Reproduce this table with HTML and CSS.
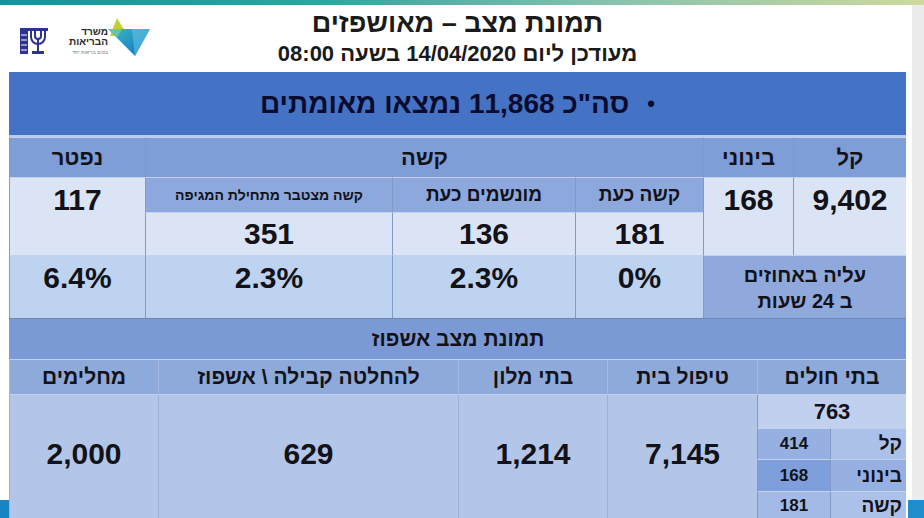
FILE: index.html
```html
<!DOCTYPE html>
<html lang="he">
<head>
<meta charset="utf-8">
<title>תמונת מצב – מאושפזים</title>
<link rel="stylesheet" href="styles.css">
</head>
<body>
<div class="stripe"></div>
<div class="page">
  <div class="gutter-left"><div class="corner"></div></div>
  <main class="sheet">
    <header class="top">
      <div class="logos">
        <svg class="emblem" width="28" height="26" viewBox="0 0 28 26">
          <g fill="#2d3192">
            <rect x="0" y="0" width="28" height="3"/>
            <rect x="0" y="0" width="8" height="26"/>
            <path d="M10 3 v6 a8 8 0 0 0 16 0 v-6 h-2 v6 a6 6 0 0 1 -12 0 v-6z"/>
            <path d="M14 3 v5 a4 4 0 0 0 8 0 v-5 h-2 v5 a2 2 0 0 1 -4 0 v-5z"/>
            <rect x="17" y="10" width="2" height="16"/>
            <rect x="12" y="23" width="12" height="3"/>
          </g>
          <g stroke="#ffffff" stroke-width="1">
            <line x1="1" y1="7" x2="7" y2="7"/>
            <line x1="1" y1="12" x2="7" y2="12"/>
            <line x1="1" y1="17" x2="7" y2="17"/>
            <line x1="1" y1="22" x2="7" y2="22"/>
          </g>
        </svg>
        <div class="moh" dir="rtl">
          <div class="moh-name">משרד</div>
          <div class="moh-name">הבריאות</div>
          <div class="moh-tag">בונים בריאות יחד</div>
        </div>
        <svg class="star" width="42" height="40" viewBox="0 0 42 40">
          <defs>
            <linearGradient id="tri" x1="0" y1="0" x2="1" y2="1">
              <stop offset="0" stop-color="#3bb7b9"/>
              <stop offset="0.6" stop-color="#1f8fca"/>
              <stop offset="1" stop-color="#1b6fb5"/>
            </linearGradient>
          </defs>
          <polygon points="9,0 20,18 2,18" fill="#b9d43a"/>
          <polygon points="0,11 42,11 27,38" fill="url(#tri)"/>
          <polygon points="27,38 24,11 42,11" fill="#6cc6e4" opacity="0.55"/>
          <polygon points="0,11 14,11 9,20" fill="#8fd0a0" opacity="0.6"/>
        </svg>
      </div>
      <div class="titles" dir="rtl">
        <div class="title">תמונת מצב – מאושפזים</div>
        <div class="subtitle">מעודכן ליום 14/04/2020 בשעה 08:00</div>
      </div>
      <div></div>
    </header>

    <div class="banner" dir="rtl">
      <span class="bullet">•</span>
      <span>סה"כ 11,868 נמצאו מאומתים</span>
    </div>
    <div class="rule"></div>

    <section class="g1" dir="rtl">
      <div class="c h">קל</div>
      <div class="c h">בינוני</div>
      <div class="c h hard">קשה</div>
      <div class="c h dead">נפטר</div>

      <div class="c v tall r2">9,402</div>
      <div class="c v tall r2 col2">168</div>
      <div class="c s col3">קשה כעת</div>
      <div class="c s col4">מונשמים כעת</div>
      <div class="c s small col5">קשה מצטבר מתחילת המגיפה</div>
      <div class="c v tall r2 col6">117</div>

      <div class="c v col3">181</div>
      <div class="c v col4">136</div>
      <div class="c v col5">351</div>

      <div class="c rise">עליה באחוזים<br>ב 24 שעות</div>
      <div class="c p col3">0%</div>
      <div class="c p col4">2.3%</div>
      <div class="c p col5">2.3%</div>
      <div class="c p col6">6.4%</div>
    </section>

    <section class="g2" dir="rtl">
      <div class="c sec">תמונת מצב אשפוז</div>

      <div class="c ch hosp">בתי חולים</div>
      <div class="c ch">טיפול בית</div>
      <div class="c ch">בתי מלון</div>
      <div class="c ch">להחלטה קבילה \ אשפוז</div>
      <div class="c ch">מחלימים</div>

      <div class="c total">763</div>
      <div class="c big b3">7,145</div>
      <div class="c big b4">1,214</div>
      <div class="c big b5">629</div>
      <div class="c big b6">2,000</div>

      <div class="c lab light">קל</div>
      <div class="c num mid">414</div>
      <div class="c lab mid">בינוני</div>
      <div class="c num dark">168</div>
      <div class="c lab light">קשה</div>
      <div class="c num mid2">181</div>
    </section>
  </main>
  <div class="gutter-right"><div class="shade"></div><div class="corner"></div></div>
</div>
</body>
</html>
```

FILE: styles.css
```css
* { box-sizing: border-box; }

body {
  margin: 0;
  width: 924px;
  height: 518px;
  overflow: hidden;
  background: #ffffff;
  font-family: "Liberation Sans", Arial, "DejaVu Sans", sans-serif;
  color: #121218;
}

.stripe {
  height: 5px;
  background: linear-gradient(90deg, #1f8d9c 0%, #36a19f 35%, #84c2ae 65%, #cfd99c 100%);
}

.page {
  display: flex;
  height: 513px;
  overflow: hidden;
}

.gutter-left {
  width: 9px;
  flex: none;
  display: flex;
  flex-direction: column;
}
.gutter-left .corner {
  margin-top: auto;
  height: 18px;
  background: #1b84c4;
}

.gutter-right {
  width: 18px;
  flex: none;
  display: flex;
  flex-direction: column;
}
.gutter-right .shade {
  flex: 1;
  border-left: 6px solid #ffffff;
  background: #ececec;
}
.gutter-right .corner {
  height: 18px;
  margin-left: 2px;
  background: #1f8ccb;
}

.sheet {
  width: 897px;
  flex: none;
}

/* header */
.top {
  height: 67px;
  display: grid;
  grid-template-columns: 1fr auto 1fr;
  align-items: center;
  padding-bottom: 3px;
}
.logos {
  display: flex;
  align-items: center;
  padding-left: 11px;
  margin-top: 8px;
}
.emblem { flex: none; }
.moh {
  margin-left: 14px;
  width: 46px;
  text-align: right;
}
.moh-name {
  font-size: 10px;
  line-height: 10px;
  font-weight: bold;
  color: #2b2b2b;
}
.moh-tag {
  font-size: 5px;
  line-height: 6px;
  color: #777;
  margin-top: 2px;
}
.star { flex: none; margin-top: -6px; }

.titles { text-align: center; }
.title {
  font-size: 27px;
  line-height: 30px;
  font-weight: bold;
  color: #1a1a1a;
}
.subtitle {
  font-size: 22px;
  line-height: 26px;
  font-weight: bold;
  color: #1a1a1a;
  margin-top: 3px;
}

/* banner */
.banner {
  height: 63px;
  background: #4472c4;
  display: flex;
  align-items: center;
  justify-content: center;
  gap: 18px;
  font-size: 28px;
  font-weight: bold;
  color: #0b0b2e;
}
.bullet { font-size: 22px; }
.rule {
  height: 2px;
  background: #b9cbea;
}

/* shared cell */
.c {
  display: flex;
  align-items: center;
  justify-content: center;
  text-align: center;
  font-weight: bold;
  border-left: 1px solid #8499c6;
  border-top: 1px solid #c3d1ee;
  white-space: nowrap;
}

/* first table */
.g1 {
  display: grid;
  grid-template-columns: 113px 90px 128px 183px 247px 136px;
  grid-template-rows: 40px 35px 43px 63px;
}
.g1 .h { background: #7f9dd7; font-size: 22px; }
.g1 .hard { grid-column: 3 / span 3; }
.g1 .dead { grid-column: 6; }
.g1 .s { background: #8ca8dc; font-size: 19px; }
.g1 .s.small { font-size: 14px; }
.g1 .v { background: #dbe4f4; font-size: 30px; }
.g1 .tall {
  grid-row: 2 / span 2;
  align-items: flex-start;
  padding-top: 5px;
}
.g1 .col2 { grid-column: 2; }
.g1 .col3 { grid-column: 3; }
.g1 .col4 { grid-column: 4; }
.g1 .col5 { grid-column: 5; }
.g1 .col6 { grid-column: 6; }
.g1 .rise {
  grid-column: 1 / span 2;
  grid-row: 4;
  background: #8fa9dc;
  font-size: 20px;
  line-height: 26px;
  padding-top: 2px;
}
.g1 .p {
  grid-row: 4;
  background: #bdd3ef;
  font-size: 30px;
  align-items: flex-start;
  padding-top: 5px;
}

/* second table */
.g2 {
  display: grid;
  grid-template-columns: 76px 73px 150px 149px 300px 149px;
  grid-template-rows: 40px 35px 34px 31px 32px 29px;
  border-top: 1px solid #6d86bd;
}
.g2 .sec {
  grid-column: 1 / -1;
  background: #7b9ad5;
  font-size: 21px;
  border-top: none;
}
.g2 .ch {
  background: #8eaadb;
  font-size: 21px;
  border-left-color: #a6b9e0;
}
.g2 .hosp { grid-column: 1 / span 2; }
.g2 .total {
  grid-column: 1 / span 2;
  grid-row: 3;
  background: #c1d0ee;
  font-size: 22px;
}
.g2 .big {
  grid-row: 3 / span 4;
  background: #b4c6e8;
  font-size: 30px;
  align-items: flex-start;
  padding-top: 42px;
  border-left-color: #9db0d8;
}
.g2 .b3 { grid-column: 3; }
.g2 .b4 { grid-column: 4; }
.g2 .b5 { grid-column: 5; }
.g2 .b6 { grid-column: 6; }
.g2 .lab {
  grid-column: 1;
  justify-content: flex-start;
  padding-right: 4px;
  font-size: 19px;
}
.g2 .num {
  grid-column: 2;
  font-size: 17px;
}
.g2 .light { background: #acc1ea; }
.g2 .mid { background: #97b0e2; }
.g2 .mid2 { background: #a4bae6; }
.g2 .dark { background: #7f9fdc; }
```
